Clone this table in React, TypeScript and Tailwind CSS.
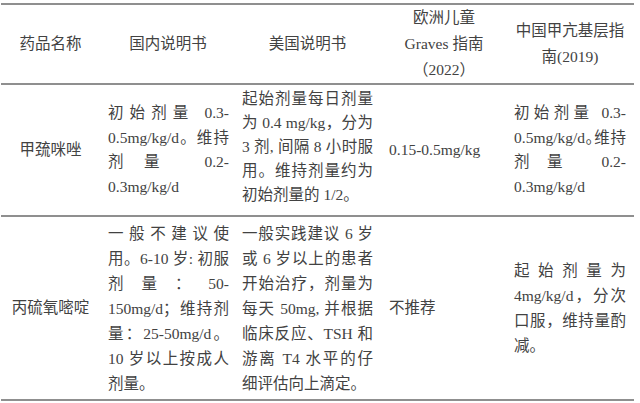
import React from 'react'

const line = 'border-[#8f8f8f]'
const head = `border-t-2 border-b-2 ${line} font-normal text-center align-middle leading-[26px]`

export default function App() {
  return (
    <div className="w-[640px] h-[403px] bg-white pt-[3px] pl-[1px]">
      <table
        className={`table-fixed border-collapse w-[633px] text-[15.5px] text-[#424242] font-['Liberation_Serif','Noto_Sans_CJK_SC',serif]`}
      >
        <colgroup>
          <col className="w-[99px]" />
          <col className="w-[136px]" />
          <col className="w-[143px]" />
          <col className="w-[130px]" />
          <col className="w-[125px]" />
        </colgroup>
        <thead>
          <tr className="h-[79px]">
            <th className={head}>药品名称</th>
            <th className={head}>国内说明书</th>
            <th className={head}>美国说明书</th>
            <th className={head}>
              欧洲儿童
              <br />
              Graves 指南
              <br />
              （2022）
            </th>
            <th className={`${head} pl-[5px] pr-[8px]`}>中国甲亢基层指南(2019)</th>
          </tr>
        </thead>
        <tbody>
          <tr className="h-[132px]">
            <td className={`border-b-2 ${line} text-center align-middle`}>甲巯咪唑</td>
            <td className={`border-b-2 ${line} align-middle text-justify leading-[24.5px] pl-[8px] pr-[7px]`}>
              初始剂量 0.3-<wbr />0.5mg/kg/d。维持剂量 0.2-<wbr />0.3mg/kg/d
            </td>
            <td className={`border-b-2 ${line} align-middle text-justify leading-[24px] pl-[6px] pr-[6px] pb-[6px]`}>
              起始剂量每日剂量为 0.4 mg/kg，分为 3 剂, 间隔 8 小时服用。维持剂量约为初始剂量的 1/2。
            </td>
            <td className={`border-b-2 ${line} align-middle pl-[10px]`}>0.15-0.5mg/kg</td>
            <td className={`border-b-2 ${line} align-middle text-justify leading-[24.5px] pl-[5px] pr-[8px]`}>
              初始剂量 0.3-<wbr />0.5mg/kg/d｡维持剂量 0.2-<wbr />0.3mg/kg/d
            </td>
          </tr>
          <tr className="h-[184px]">
            <td className={`border-b-2 ${line} text-center align-middle`}>丙硫氧嘧啶</td>
            <td className={`border-b-2 ${line} align-middle text-justify leading-[25px] pl-[8px] pr-[7px]`}>
              一般不建议使用。6-10 岁: 初服剂量：50-<wbr />150mg/d；维持剂量：25-50mg/d。10 岁以上按成人剂量。
            </td>
            <td className={`border-b-2 ${line} align-middle text-justify leading-[25px] pl-[6px] pr-[6px]`}>
              一般实践建议 6 岁或 6 岁以上的患者开始治疗，剂量为每天 50mg, 并根据临床反应、TSH 和游离 T4 水平的仔细评估向上滴定。
            </td>
            <td className={`border-b-2 ${line} align-middle pl-[10px]`}>不推荐</td>
            <td className={`border-b-2 ${line} align-middle text-justify leading-[25px] pl-[5px] pr-[8px]`}>
              起始剂量为 4mg/kg/d，分次口服，维持量酌减。
            </td>
          </tr>
        </tbody>
      </table>
    </div>
  )
}
